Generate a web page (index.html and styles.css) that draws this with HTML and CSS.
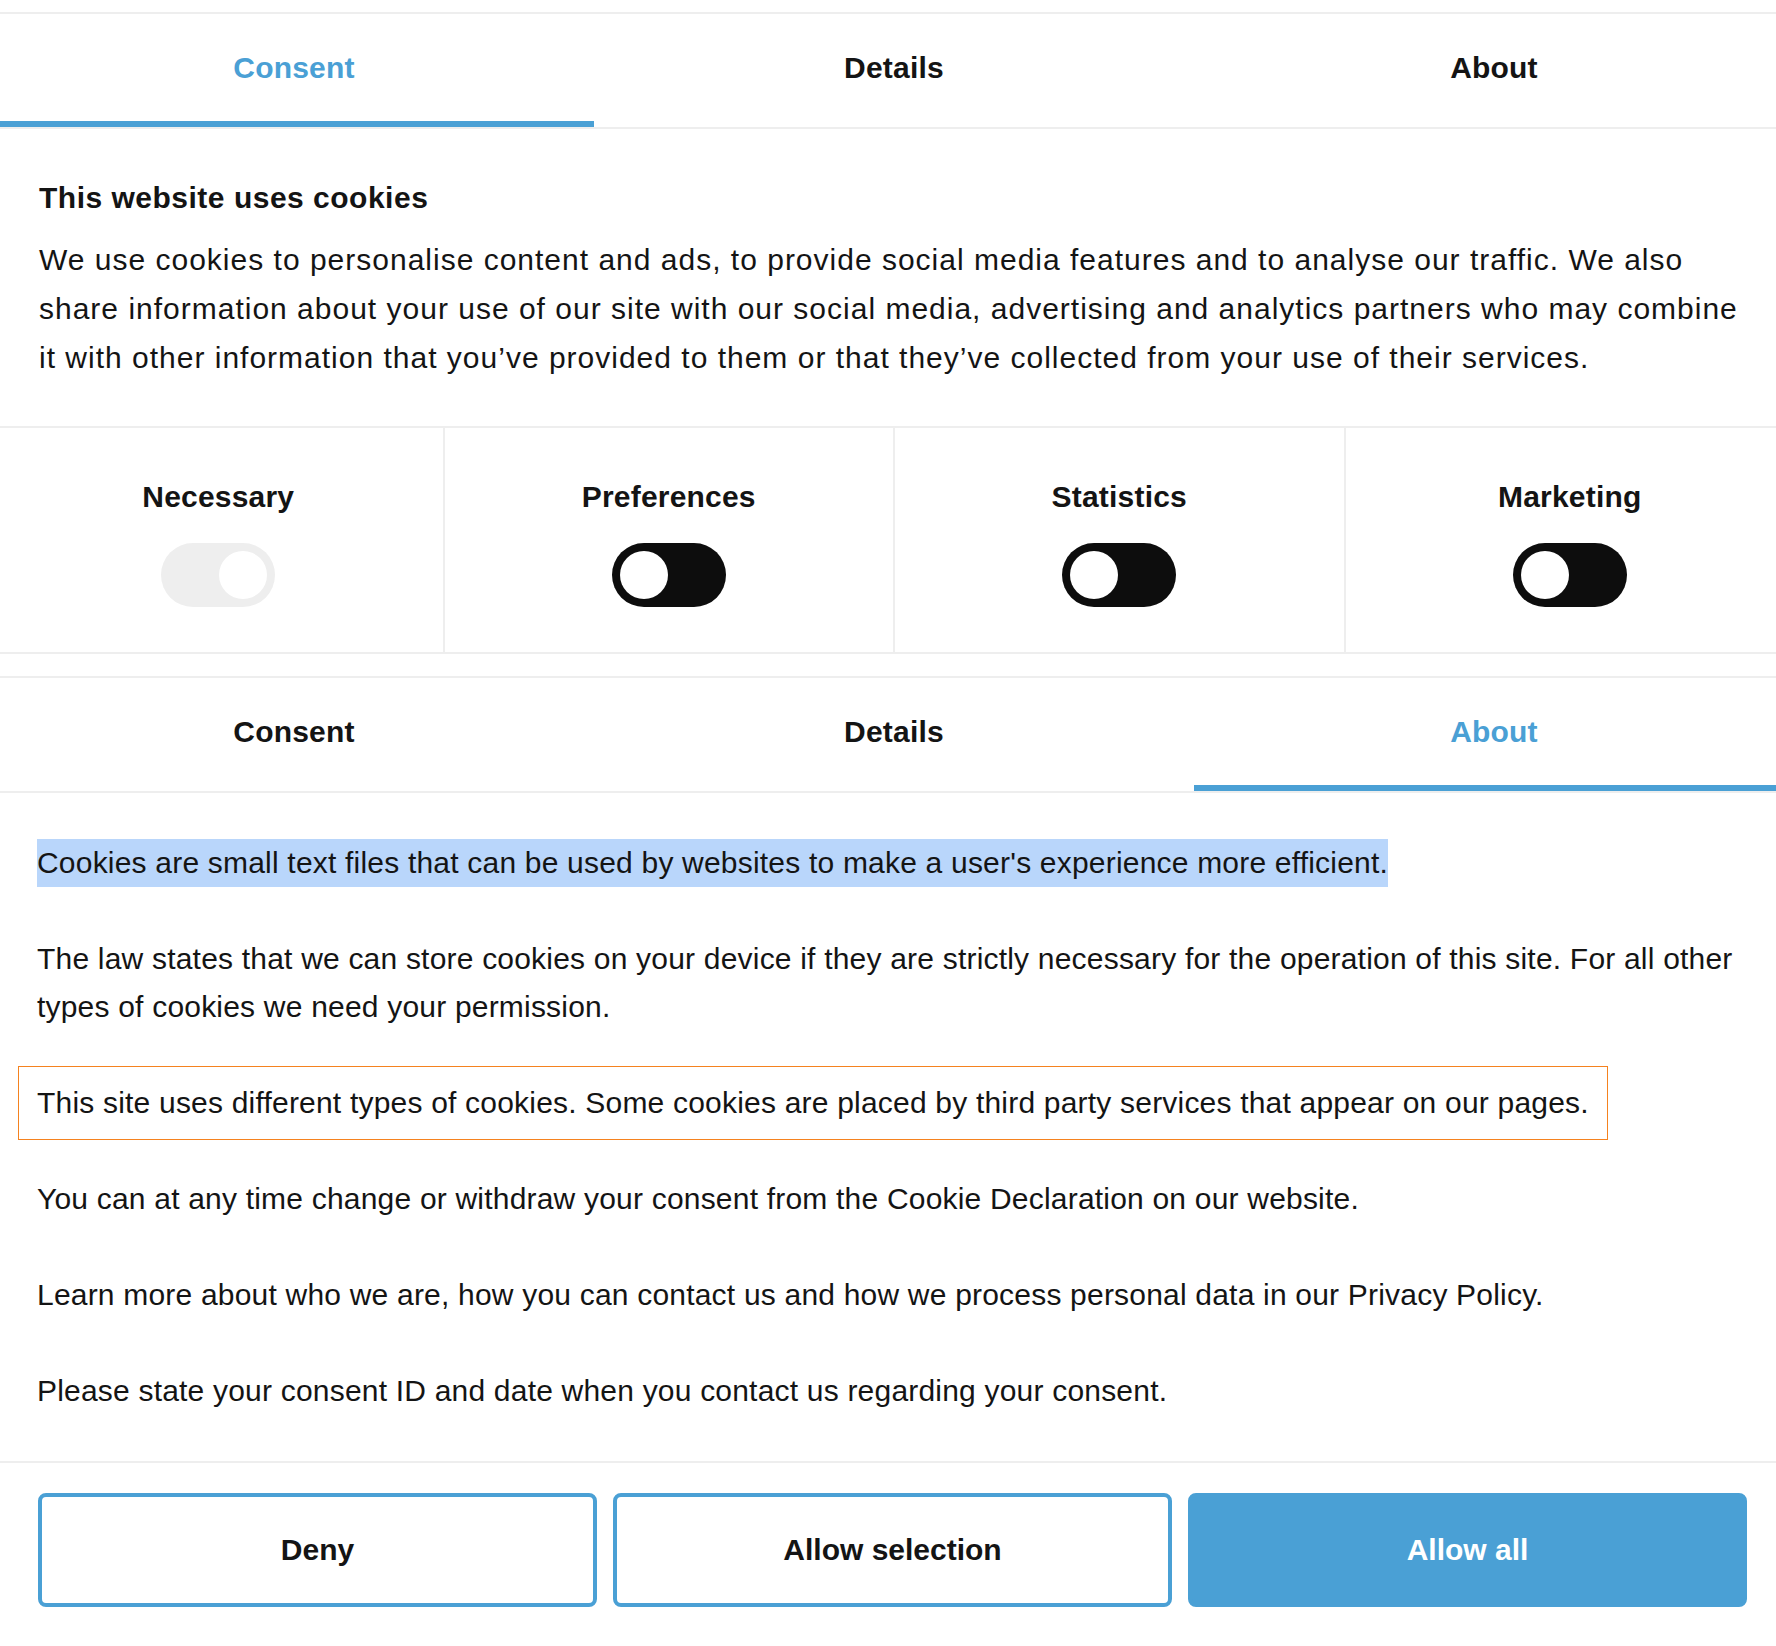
FILE: index.html
```html
<!DOCTYPE html>
<html lang="en">
<head>
<meta charset="utf-8">
<title>Cookie consent</title>
<link rel="stylesheet" href="styles.css">
</head>
<body>
<div class="dialog">
  <nav class="tabs">
    <a class="tab active">Consent</a>
    <a class="tab">Details</a>
    <a class="tab">About</a>
  </nav>

  <section class="consent">
    <h2 class="consent-title">This website uses cookies</h2>
    <p class="consent-text">We use cookies to personalise content and ads, to provide social media features and to analyse our traffic. We also share information about your use of our site with our social media, advertising and analytics partners who may combine it with other information that you’ve provided to them or that they’ve collected from your use of their services.</p>
  </section>

  <div class="levels">
    <div class="level">
      <span class="level-label">Necessary</span>
      <span class="switch switch-disabled"><span class="knob"></span></span>
    </div>
    <div class="level">
      <span class="level-label">Preferences</span>
      <span class="switch"><span class="knob"></span></span>
    </div>
    <div class="level">
      <span class="level-label">Statistics</span>
      <span class="switch"><span class="knob"></span></span>
    </div>
    <div class="level">
      <span class="level-label">Marketing</span>
      <span class="switch"><span class="knob"></span></span>
    </div>
  </div>

  <nav class="tabs tabs-second">
    <a class="tab">Consent</a>
    <a class="tab">Details</a>
    <a class="tab active">About</a>
  </nav>

  <section class="about">
    <p class="about-p"><span class="selected">Cookies are small text files that can be used by websites to make a user's experience more efficient.</span></p>
    <p class="about-p">The law states that we can store cookies on your device if they are strictly necessary for the operation of this site. For all other types of cookies we need your permission.</p>
    <p class="about-p about-boxed">This site uses different types of cookies. Some cookies are placed by third party services that appear on our pages.</p>
    <p class="about-p">You can at any time change or withdraw your consent from the Cookie Declaration on our website.</p>
    <p class="about-p">Learn more about who we are, how you can contact us and how we process personal data in our Privacy Policy.</p>
    <p class="about-p">Please state your consent ID and date when you contact us regarding your consent.</p>
  </section>

  <footer class="actions">
    <button class="btn">Deny</button>
    <button class="btn">Allow selection</button>
    <button class="btn btn-primary">Allow all</button>
  </footer>
</div>
</body>
</html>
```

FILE: styles.css
```css
html, body {
  margin: 0;
  padding: 0;
  background: #ffffff;
}

body {
  overflow: hidden;
  font-family: "Liberation Sans", Arial, Helvetica, sans-serif;
  color: #141414;
}

.dialog {
  width: 1800px;
  margin-left: -6px;
  padding-top: 12px;
  box-sizing: border-box;
}

/* Tabs */
.tabs {
  display: flex;
  border-top: 2px solid #eeeeee;
  border-bottom: 2px solid #eeeeee;
}

.tabs-second {
  margin-top: 22px;
}

.tab {
  flex: 1;
  text-align: center;
  font-size: 30px;
  font-weight: 700;
  letter-spacing: 0.2px;
  line-height: 48px;
  padding: 30px 0 29px;
  border-bottom: 6px solid transparent;
  color: #141414;
}

.tab.active {
  color: #4aa0d5;
  border-bottom-color: #4aa0d5;
}

/* Consent body */
.consent {
  padding: 45px 46px 44px 45px;
}

.consent-title {
  margin: 0 0 14px;
  font-size: 30px;
  font-weight: 700;
  letter-spacing: 0.5px;
  line-height: 48px;
}

.consent-text {
  margin: 0;
  font-size: 30px;
  letter-spacing: 1px;
  line-height: 48.8px;
}

/* Toggle levels */
.levels {
  display: flex;
  border-top: 2px solid #eeeeee;
  border-bottom: 2px solid #eeeeee;
}

.level {
  flex: 1;
  display: flex;
  flex-direction: column;
  align-items: center;
  padding: 45px 0;
}

.level + .level {
  border-left: 2px solid #eeeeee;
}

.level-label {
  font-size: 30px;
  font-weight: 700;
  letter-spacing: 0.2px;
  line-height: 48px;
  margin-bottom: 22px;
}

.switch {
  display: flex;
  align-items: center;
  justify-content: flex-start;
  width: 114px;
  height: 64px;
  padding: 0 8px;
  box-sizing: border-box;
  border-radius: 32px;
  background: #0d0d0d;
}

.switch-disabled {
  background: #eeeeee;
  justify-content: flex-end;
}

.knob {
  width: 48px;
  height: 48px;
  border-radius: 50%;
  background: #ffffff;
}

/* About */
.about {
  padding: 46px 43px 46px;
}

.about-p {
  margin: 0 0 48px;
  font-size: 30px;
  letter-spacing: 0.2px;
  line-height: 48px;
}

.about-p:last-child {
  margin-bottom: 0;
}

.selected {
  background: #b9d6fb;
  padding: 7px 0 7.5px;
}

.about-boxed {
  width: fit-content;
  margin: -13px 0 35px -19px;
  padding: 12px 18px;
  border: 1px solid #f5821f;
}

/* Footer buttons */
.actions {
  display: flex;
  gap: 16px;
  border-top: 2px solid #eeeeee;
  padding: 30px 47px 39px 44px;
}

.btn {
  flex: 1;
  height: 114px;
  box-sizing: border-box;
  border: 4px solid #4aa0d5;
  border-radius: 8px;
  background: #ffffff;
  color: #141414;
  font-family: "Liberation Sans", Arial, Helvetica, sans-serif;
  font-size: 30px;
  font-weight: 700;
  letter-spacing: 0;
}

.btn-primary {
  background: #4aa0d5;
  color: #ffffff;
}
```
